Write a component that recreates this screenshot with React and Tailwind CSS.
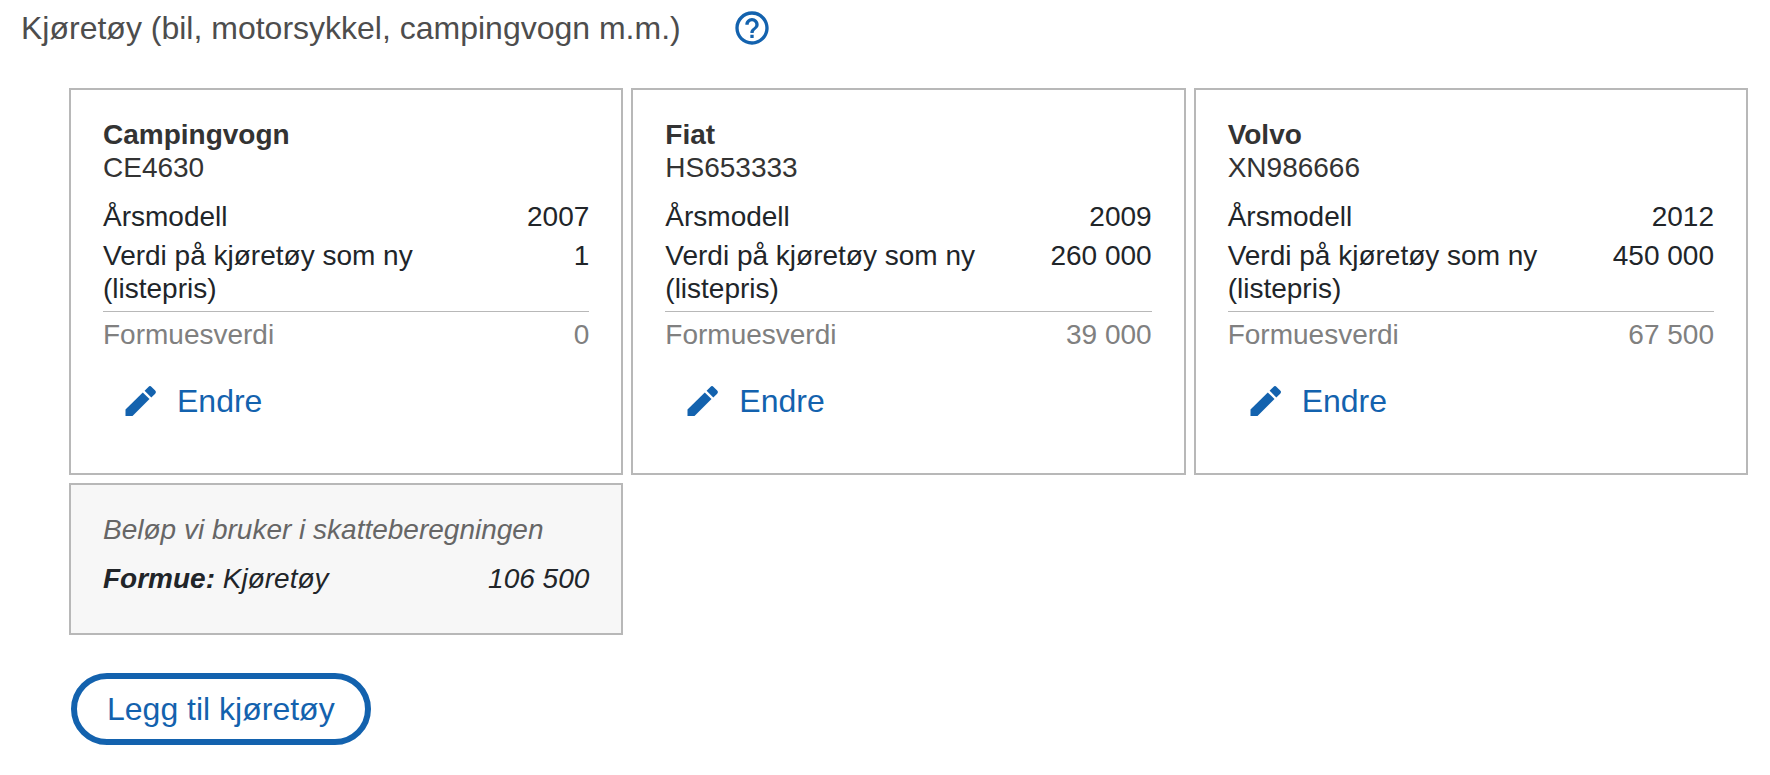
import React from "react"

const vehicles = [
  { name: "Campingvogn", regNr: "CE4630", year: "2007", price: "1", value: "0" },
  {
    name: "Fiat",
    regNr: "HS653333",
    year: "2009",
    price: "260 000",
    value: "39 000",
  },
  {
    name: "Volvo",
    regNr: "XN986666",
    year: "2012",
    price: "450 000",
    value: "67 500",
  },
]

// Icons
function HelpIcon() {
  return (
    <svg
      viewBox="0 0 24 24"
      fill="currentColor"
      className="size-10"
      aria-hidden="true"
    >
      <path d="M11 18h2v-2h-2v2zm1-16C6.48 2 2 6.48 2 12s4.48 10 10 10 10-4.48 10-10S17.52 2 12 2zm0 18c-4.41 0-8-3.59-8-8s3.59-8 8-8 8 3.59 8 8-3.59 8-8 8zm0-14c-2.21 0-4 1.79-4 4h2c0-1.1.9-2 2-2s2 .9 2 2c0 2-3 1.75-3 5h2c0-2.25 3-2.5 3-5 0-2.21-1.79-4-4-4z" />
    </svg>
  )
}

function PencilIcon() {
  return (
    <svg
      viewBox="-4.5 -5 40 40"
      fill="currentColor"
      className="size-10"
      aria-hidden="true"
    >
      <path d="M0 30V23.6L17.3 6.4L24 13.1L7 30Z" />
      <path d="M19.1 4.7L22.9 .9Q24.5-.7 26.1 .9L29.7 4.5Q31.3 6.1 29.7 7.7L25.8 11.4Z" />
    </svg>
  )
}

function Row({ label, value, className = "" }) {
  return (
    <div className={`flex justify-between ${className}`}>
      <dt className="w-2/3">{label}</dt>
      <dd className="whitespace-nowrap">{value}</dd>
    </div>
  )
}

function VehicleCard({ vehicle }) {
  return (
    <article className="border-2 border-[#b8b8b8] px-8 pt-7 pb-[52px] text-[#212529]">
      <h2 className="font-bold text-[#333333]">{vehicle.name}</h2>
      <p className="text-[#333333]">{vehicle.regNr}</p>

      <dl className="mt-4 flex flex-col gap-1.5">
        <Row label="Årsmodell" value={vehicle.year} />
        <Row label="Verdi på kjøretøy som ny (listepris)" value={vehicle.price} />
        <Row
          label="Formuesverdi"
          value={vehicle.value}
          className="border-t border-[#b8b8b8] pt-1.5 text-[#808080]"
        />
      </dl>

      <button
        type="button"
        className="mt-[30px] ml-[18px] flex items-center gap-4 text-[32px] leading-9 text-[#1362ae]"
      >
        <PencilIcon />
        Endre
      </button>
    </article>
  )
}

export default function App() {
  return (
    <main className="bg-white pt-2 pr-[22px] pb-8 pl-[21px] font-['Liberation_Sans',Arial,sans-serif] text-[28px] leading-[33px]">
      <header className="flex items-center gap-[51px]">
        <h1 className="text-[32px] leading-9 text-[#4d4d4d]">
          Kjøretøy (bil, motorsykkel, campingvogn m.m.)
        </h1>
        <button type="button" aria-label="Hjelp" className="text-[#1362ae]">
          <HelpIcon />
        </button>
      </header>

      <div className="mt-10 ml-12">
        <div className="grid grid-cols-3 gap-2">
          {vehicles.map((vehicle) => (
            <VehicleCard key={vehicle.regNr} vehicle={vehicle} />
          ))}

          <section className="border-2 border-[#b8b8b8] bg-[#f7f7f7] px-8 pt-7 pb-[38px] italic text-[#212529]">
            <h2 className="text-[#666666]">Beløp vi bruker i skatteberegningen</h2>
            <dl className="mt-4">
              <Row
                label={
                  <>
                    <strong>Formue:</strong> Kjøretøy
                  </>
                }
                value="106 500"
              />
            </dl>
          </section>
        </div>

        <button
          type="button"
          className="mt-[38px] ml-0.5 rounded-full border-6 border-[#1362ae] px-[30px] py-3 text-[32px] leading-9 text-[#1362ae]"
        >
          Legg til kjøretøy
        </button>
      </div>
    </main>
  )
}
